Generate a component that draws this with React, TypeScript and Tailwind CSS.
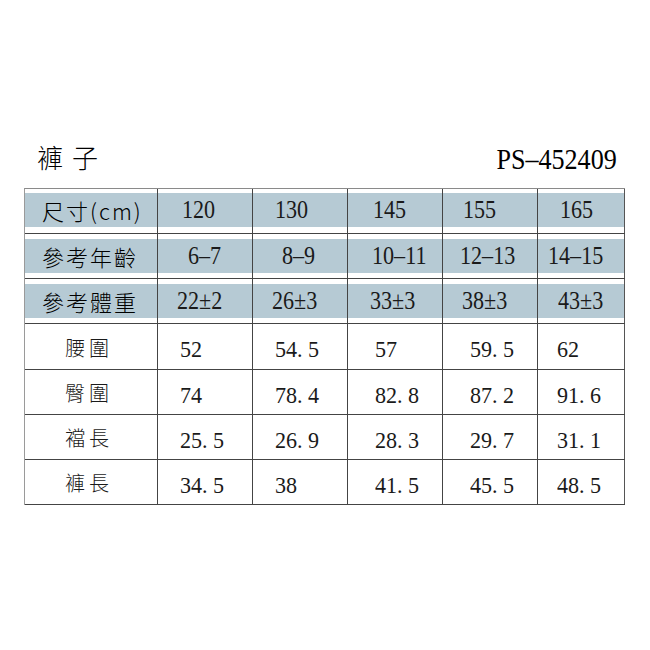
import React from "react";

type Cell = { v: string; pl: string };

const colW = ["w-[133px]", "w-[95px]", "w-[95px]", "w-[95px]", "w-[95px]", "w-[87px]"];

const headRows: { label: string; band: string; cells: Cell[] }[] = [
  {
    label: "尺寸(cm)",
    band: "pt-[4px]",
    cells: [
      { v: "120", pl: "pl-[24px]" },
      { v: "130", pl: "pl-[22px]" },
      { v: "145", pl: "pl-[25px]" },
      { v: "155", pl: "pl-[20px]" },
      { v: "165", pl: "pl-[22px]" },
    ],
  },
  {
    label: "參考年齡",
    band: "pt-[5px]",
    cells: [
      { v: "6–7", pl: "pl-[30px]" },
      { v: "8–9", pl: "pl-[29px]" },
      { v: "10–11", pl: "pl-[24px]" },
      { v: "12–13", pl: "pl-[17px]" },
      { v: "14–15", pl: "pl-[10px]" },
    ],
  },
  {
    label: "參考體重",
    band: "pt-[5px]",
    cells: [
      { v: "22±2", pl: "pl-[19px]" },
      { v: "26±3", pl: "pl-[19px]" },
      { v: "33±3", pl: "pl-[22px]" },
      { v: "38±3", pl: "pl-[19px]" },
      { v: "43±3", pl: "pl-[20px]" },
    ],
  },
];

const bodyPl = ["pl-[22px]", "pl-[22px]", "pl-[27px]", "pl-[27px]", "pl-[19px]"];

const bodyRows: { label: string; h: string; vals: string[] }[] = [
  { label: "腰圍", h: "h-[46px]", vals: ["52", "54.5", "57", "59.5", "62"] },
  { label: "臀圍", h: "h-[45px]", vals: ["74", "78.4", "82.8", "87.2", "91.6"] },
  { label: "襠長", h: "h-[45px]", vals: ["25.5", "26.9", "28.3", "29.7", "31.1"] },
  { label: "褲長", h: "h-[45px]", vals: ["34.5", "38", "41.5", "45.5", "48.5"] },
];

function Num({ v }: { v: string }) {
  // period takes a full digit width, like half-width mincho digits
  const parts = v.split(".");
  return (
    <span className="inline-block origin-left scale-x-[0.92] font-['Liberation_Serif','DejaVu_Serif','Times_New_Roman',serif] text-[24px] leading-none text-[#1a1a1a]">
      {parts[0]}
      {parts.length > 1 && (
        <>
          <span className="inline-block w-[12px]">.</span>
          {parts[1]}
        </>
      )}
    </span>
  );
}

export default function App() {
  return (
    <div className="w-[650px] h-[650px] bg-white font-['Noto_Sans_CJK_TC']">
      <div className="h-[188px] flex items-end justify-between pl-[37px] pr-[33px] pb-[14px]">
        <span className="mb-[4px] text-[26px] leading-none tracking-[9px] font-light text-black">
          褲子
        </span>
        <span className="inline-block origin-right scale-x-[0.9] font-['Liberation_Serif','DejaVu_Serif','Times_New_Roman',serif] text-[29px] leading-none text-black">
          PS–452409
        </span>
      </div>

      <div className="ml-[24px] w-[601px] border-l border-l-[#9a9a9a] border-t border-t-[#8a8a8a]">
        {headRows.map((row) => (
          <div key={row.label} className="flex h-[45px] border-b border-[#444]">
            <div className={`${colW[0]} shrink-0 border-r border-[#444] ${row.band}`}>
              <div className="h-[34px] bg-[#b6cad4] flex items-center pl-[17px] text-[22px] tracking-[2px] font-light text-black">
                {row.label}
              </div>
            </div>
            {row.cells.map((c, i) => (
              <div
                key={i}
                className={`${colW[i + 1]} shrink-0 border-r ${i === 4 ? "border-[#555]" : "border-[#444]"} ${row.band}`}
              >
                <div className={`h-[34px] bg-[#b6cad4] flex items-center ${c.pl}`}>
                  <span className="inline-block origin-left scale-x-[0.85] font-['Liberation_Serif','DejaVu_Serif','Times_New_Roman',serif] text-[26px] leading-none text-[#1a1a1a] whitespace-nowrap">
                    {c.v}
                  </span>
                </div>
              </div>
            ))}
          </div>
        ))}

        {bodyRows.map((row) => (
          <div key={row.label} className={`flex ${row.h} border-b border-[#444]`}>
            <div className={`${colW[0]} shrink-0 border-r border-[#444] flex items-center pl-[40px] pt-[2px]`}>
              <span className="text-[20px] leading-none tracking-[4px] font-light text-[#1a1a1a]">
                {row.label}
              </span>
            </div>
            {row.vals.map((v, i) => (
              <div
                key={i}
                className={`${colW[i + 1]} shrink-0 border-r ${i === 4 ? "border-[#555]" : "border-[#444]"} flex items-center pt-[5px] ${bodyPl[i]}`}
              >
                <Num v={v} />
              </div>
            ))}
          </div>
        ))}
      </div>
    </div>
  );
}
